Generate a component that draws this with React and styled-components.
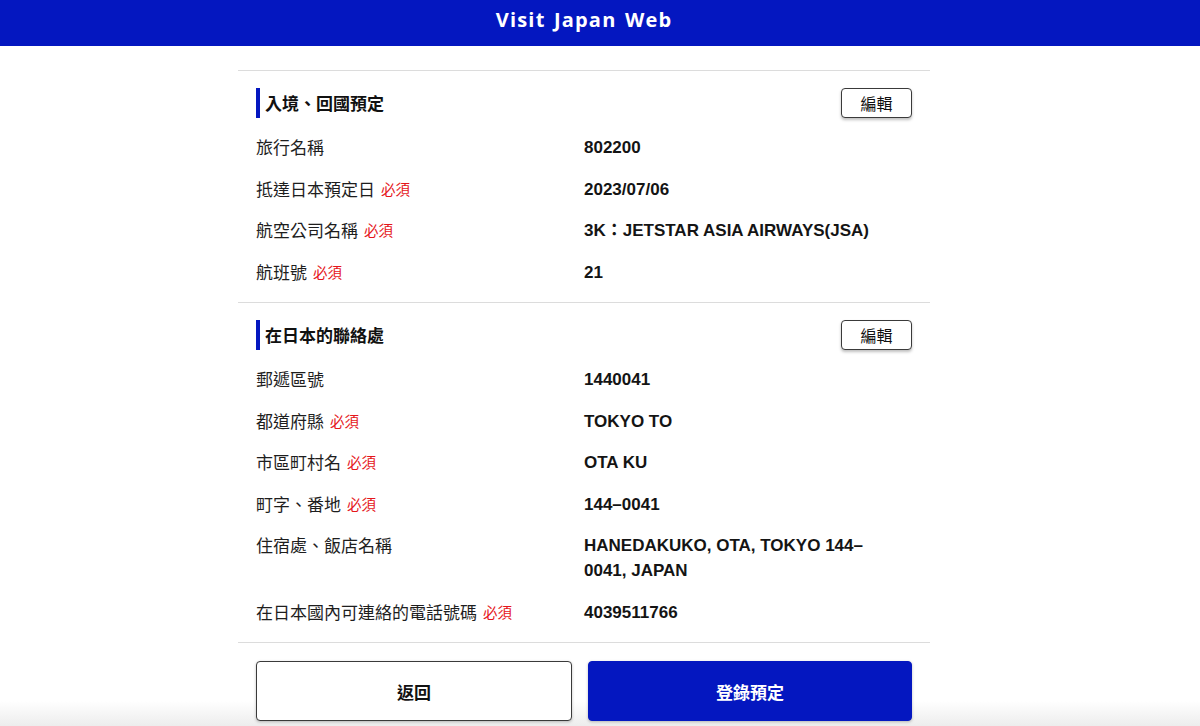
import React from 'react';
import styled, { createGlobalStyle } from 'styled-components';

const BLUE = '#0417c0';

const GlobalStyle = createGlobalStyle`
  html, body {
    margin: 0;
    padding: 0;
    background: #ffffff;
  }
  body {
    font-family: "Liberation Sans", "Noto Sans CJK TC", sans-serif;
    color: #1a1a1a;
  }
`;

const Page = styled.div`
  min-height: 726px;
  display: flex;
  flex-direction: column;
`;

const Header = styled.header`
  background-color: ${BLUE};
  height: 46px;
  box-sizing: border-box;
  display: flex;
  align-items: center;
  justify-content: center;
  padding: 0 32px 6px 0;
`;

const Title = styled.h1`
  margin: 0;
  font-family: "Open Sans", "Liberation Sans", sans-serif;
  font-size: 20px;
  line-height: 24px;
  font-weight: 700;
  letter-spacing: 1.2px;
  word-spacing: 2px;
  color: #ffffff;
`;

const Main = styled.main`
  flex: 1;
  display: flex;
  justify-content: center;
  padding: 24px 32px 0 0;
`;

const Content = styled.div`
  width: 692px;
  border-top: 1px solid #dcdcdc;
`;

const Section = styled.section`
  padding: 17px 18px 9px;
  border-bottom: 1px solid #dcdcdc;
`;

const SectionHead = styled.div`
  display: flex;
  align-items: center;
  justify-content: space-between;
  height: 30px;
  margin-bottom: 9px;
`;

const SectionTitle = styled.h2`
  margin: 0;
  height: 30px;
  display: flex;
  align-items: center;
  border-left: 4px solid ${BLUE};
  padding-left: 5px;
  font-family: "Noto Sans CJK TC", sans-serif;
  font-size: 17px;
  line-height: 30px;
  font-weight: 700;
  color: #111;
`;

const EditButton = styled.button`
  width: 71px;
  height: 30px;
  background: #fff;
  border: 1px solid #3a3a3a;
  border-radius: 4px;
  box-shadow: 0 2px 3px rgba(0, 0, 0, 0.25);
  font-family: "Noto Sans CJK TC", sans-serif;
  font-size: 16px;
  line-height: 20px;
  color: #111;
  cursor: pointer;
  padding: 0;
`;

const Row = styled.div`
  display: grid;
  grid-template-columns: 1fr 1fr;
  align-items: start;
  padding: 8.25px 0;
  font-size: 17px;
  line-height: 25px;
`;

const Label = styled.div`
  display: flex;
  align-items: center;
  gap: 6px;
  height: 25px;
  margin-top: -1px;
  font-family: "Noto Sans CJK TC", sans-serif;
  color: #1e1e1e;
`;

const Required = styled.span`
  font-size: 14.5px;
  line-height: 25px;
  color: #e5161b;
`;

const Value = styled.div`
  padding-right: 40px;
  font-family: "Liberation Sans", "Noto Sans CJK TC", sans-serif;
  font-weight: 700;
  color: #141414;
`;

const Footer = styled.footer`
  display: flex;
  justify-content: center;
  padding: 18px 32px 6px 0;
  background: linear-gradient(to bottom, #ffffff 0, #ffffff 58px, #ececec 100%);
`;

const Actions = styled.div`
  width: 656px;
  display: grid;
  grid-template-columns: 316px 324px;
  gap: 16px;
`;

const ActionButton = styled.button`
  height: 60px;
  border-radius: 4px;
  font-family: "Noto Sans CJK TC", sans-serif;
  font-size: 17px;
  font-weight: 700;
  cursor: pointer;
  border: 1px solid ${({ $primary }) => ($primary ? BLUE : '#3a3a3a')};
  background: ${({ $primary }) => ($primary ? BLUE : '#ffffff')};
  color: ${({ $primary }) => ($primary ? '#ffffff' : '#111111')};
  box-shadow: 0 1px 3px rgba(0, 0, 0, 0.25);
`;

const sections = [
  {
    title: '入境、回國預定',
    rows: [
      { label: '旅行名稱', value: '802200' },
      { label: '抵達日本預定日', required: true, value: '2023/07/06' },
      { label: '航空公司名稱', required: true, value: '3K：JETSTAR ASIA AIRWAYS(JSA)' },
      { label: '航班號', required: true, value: '21' },
    ],
  },
  {
    title: '在日本的聯絡處',
    rows: [
      { label: '郵遞區號', value: '1440041' },
      { label: '都道府縣', required: true, value: 'TOKYO TO' },
      { label: '市區町村名', required: true, value: 'OTA KU' },
      { label: '町字、番地', required: true, value: '144–0041' },
      { label: '住宿處、飯店名稱', value: 'HANEDAKUKO, OTA, TOKYO 144–0041, JAPAN' },
      { label: '在日本國內可連絡的電話號碼', required: true, value: '4039511766' },
    ],
  },
];

const App = () => {
  return (
    <Page>
      <GlobalStyle />
      <Header>
        <Title>Visit Japan Web</Title>
      </Header>

      <Main>
        <Content>
          {sections.map((section) => (
            <Section key={section.title}>
              <SectionHead>
                <SectionTitle>{section.title}</SectionTitle>
                <EditButton>編輯</EditButton>
              </SectionHead>
              {section.rows.map((row) => (
                <Row key={row.label}>
                  <Label>
                    {row.label}
                    {row.required && <Required>必須</Required>}
                  </Label>
                  <Value>{row.value}</Value>
                </Row>
              ))}
            </Section>
          ))}
        </Content>
      </Main>

      <Footer>
        <Actions>
          <ActionButton>返回</ActionButton>
          <ActionButton $primary>登錄預定</ActionButton>
        </Actions>
      </Footer>
    </Page>
  );
};

export default App;
